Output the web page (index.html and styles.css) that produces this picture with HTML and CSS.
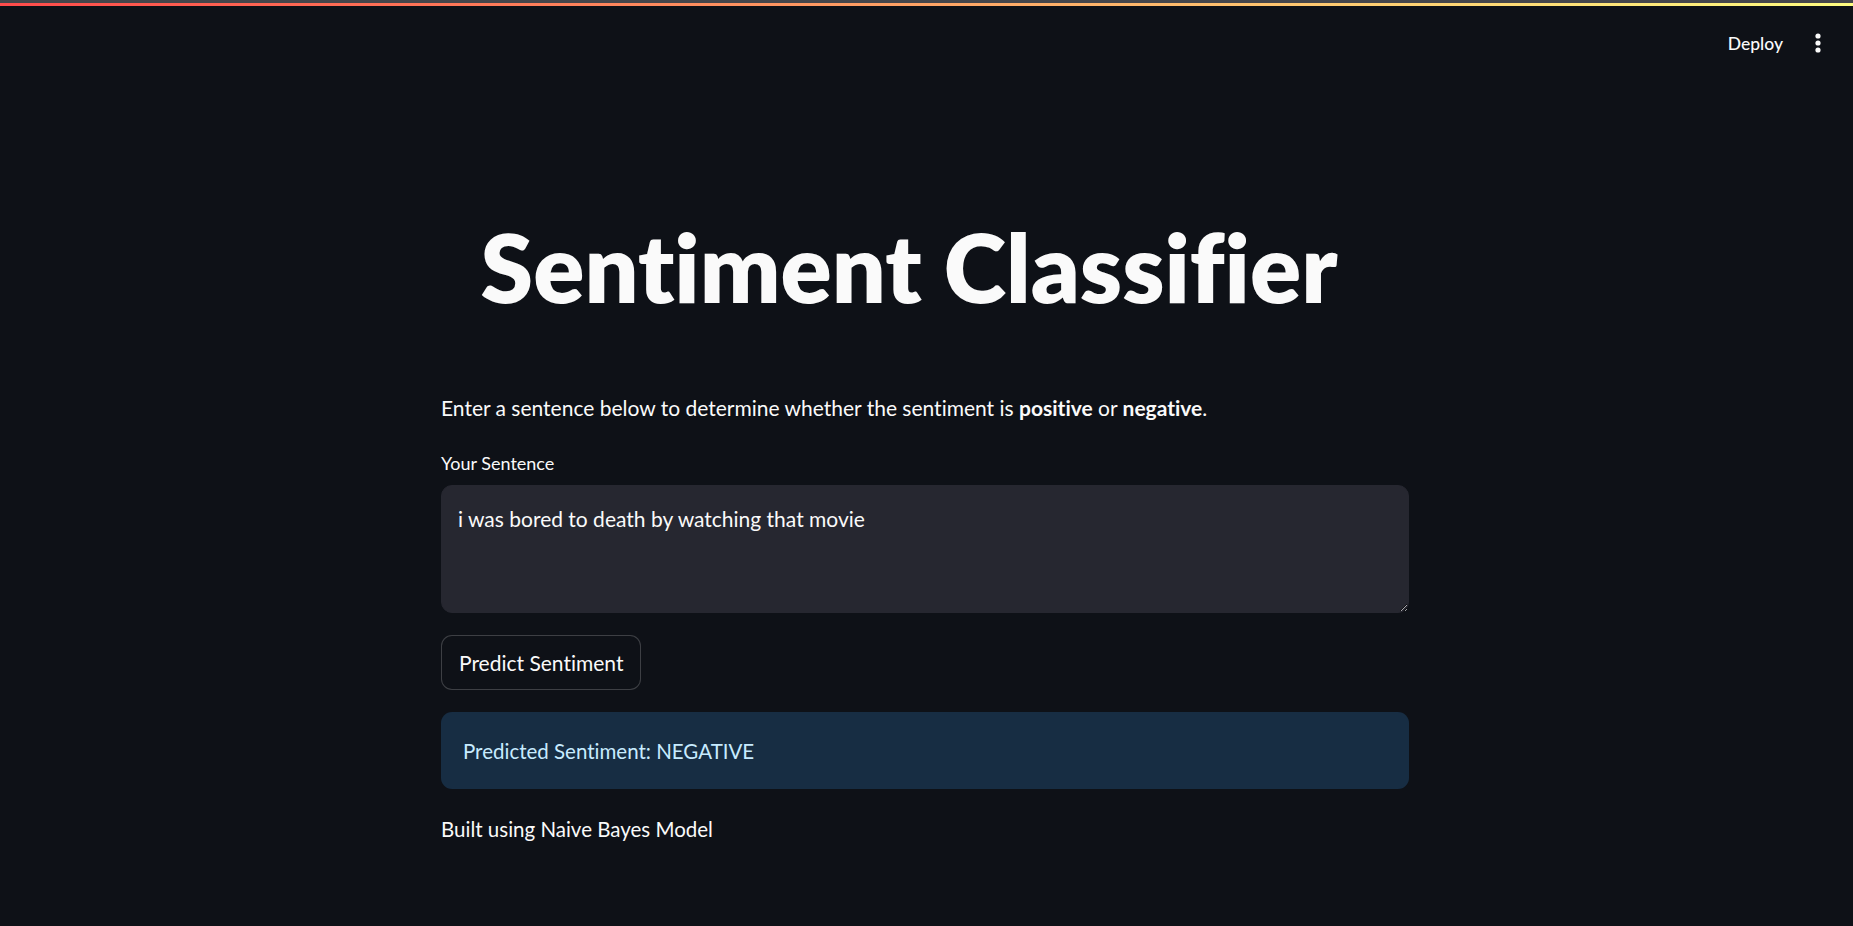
FILE: index.html
```html
<!DOCTYPE html>
<html lang="en">
<head>
<meta charset="utf-8">
<title>Sentiment Classifier</title>
<link rel="stylesheet" href="styles.css">
</head>
<body>
<div class="chrome-line"></div>
<div class="decoration"></div>
<header class="toolbar">
  <button class="deploy">Deploy</button>
  <button class="menu" aria-label="Main menu">
    <svg width="8" height="22" viewBox="0 0 8 22"><circle cx="4" cy="4" r="2.6" fill="#fafafa"/><circle cx="4" cy="11" r="2.6" fill="#fafafa"/><circle cx="4" cy="18" r="2.6" fill="#fafafa"/></svg>
  </button>
</header>
<main class="main">
  <section class="block">
    <h1 class="title">Sentiment Classifier</h1>
    <p class="intro">Enter a sentence below to determine whether the sentiment is <strong>positive</strong> or <strong>negative</strong>.</p>
    <div class="field">
      <label class="label" for="sentence">Your Sentence</label>
      <textarea id="sentence" class="textarea">i was bored to death by watching that movie</textarea>
    </div>
    <div class="actions">
      <button class="btn">Predict Sentiment</button>
    </div>
    <div class="alert">Predicted Sentiment: NEGATIVE</div>
    <p class="footer-note">Built using Naive Bayes Model</p>
  </section>
</main>
</body>
</html>
```
FILE: styles.css
```css
* { box-sizing: border-box; }
html, body { margin: 0; padding: 0; }
body {
  background: #0e1117;
  color: #fafafa;
  font-family: "Lato", "Open Sans", sans-serif;
  font-variant-ligatures: none;
  height: 926px;
  overflow: hidden;
}
button, textarea { font-variant-ligatures: none; }
.chrome-line { height: 3px; background: #45464b; }
.decoration { height: 3px; background: linear-gradient(90deg, #ff4b4b, #fffd80); }
.toolbar {
  height: 74px;
  display: flex;
  align-items: center;
  justify-content: flex-end;
  padding-right: 15px;
  gap: 3px;
}
.deploy {
  background: transparent;
  border: none;
  color: #fafafa;
  font-family: inherit;
  font-size: 17.5px;
  font-weight: 500;
  padding: 8px 12px;
  cursor: pointer;
}
.menu {
  width: 40px;
  height: 40px;
  background: transparent;
  border: none;
  display: flex;
  align-items: center;
  justify-content: center;
  padding: 0;
}
.main {
  display: flex;
  justify-content: center;
  padding-right: 3px;
}
.block {
  width: 968px;
  display: flex;
  flex-direction: column;
}
.title {
  margin: 129px 0 0;
  padding-right: 32px;
  font-size: 95px;
  font-weight: 800;
  line-height: 114px;
  text-align: center;
  color: #fafafa;
}
.intro {
  margin: 68px 0 0;
  font-size: 21px;
  line-height: 1.6;
}
.intro strong { font-weight: 700; }
.field {
  margin-top: 24px;
  display: flex;
  flex-direction: column;
  gap: 8px;
}
.label {
  font-size: 18px;
  line-height: 1.6;
}
.textarea {
  height: 128px;
  width: 100%;
  background: #262730;
  color: #fafafa;
  border: 1px solid #262730;
  border-radius: 11px;
  padding: 16px 16px 10px;
  font-family: inherit;
  font-size: 21px;
  line-height: 1.6;
  resize: vertical;
  outline: none;
  color-scheme: dark;
}
.actions { margin-top: 22px; display: flex; }
.btn {
  height: 55px;
  padding: 0 17px;
  background: #0e1117;
  color: #fafafa;
  border: 1px solid rgba(250, 250, 250, 0.2);
  border-radius: 11px;
  font-family: inherit;
  font-size: 21px;
  cursor: pointer;
}
.alert {
  margin-top: 22px;
  height: 77px;
  display: flex;
  align-items: center;
  padding: 0 22px;
  background: #172d43;
  color: #c7ebff;
  border-radius: 11px;
  font-size: 20.5px;
}
.footer-note {
  margin: 24px 0 0;
  font-size: 20.5px;
  line-height: 1.6;
}
```
